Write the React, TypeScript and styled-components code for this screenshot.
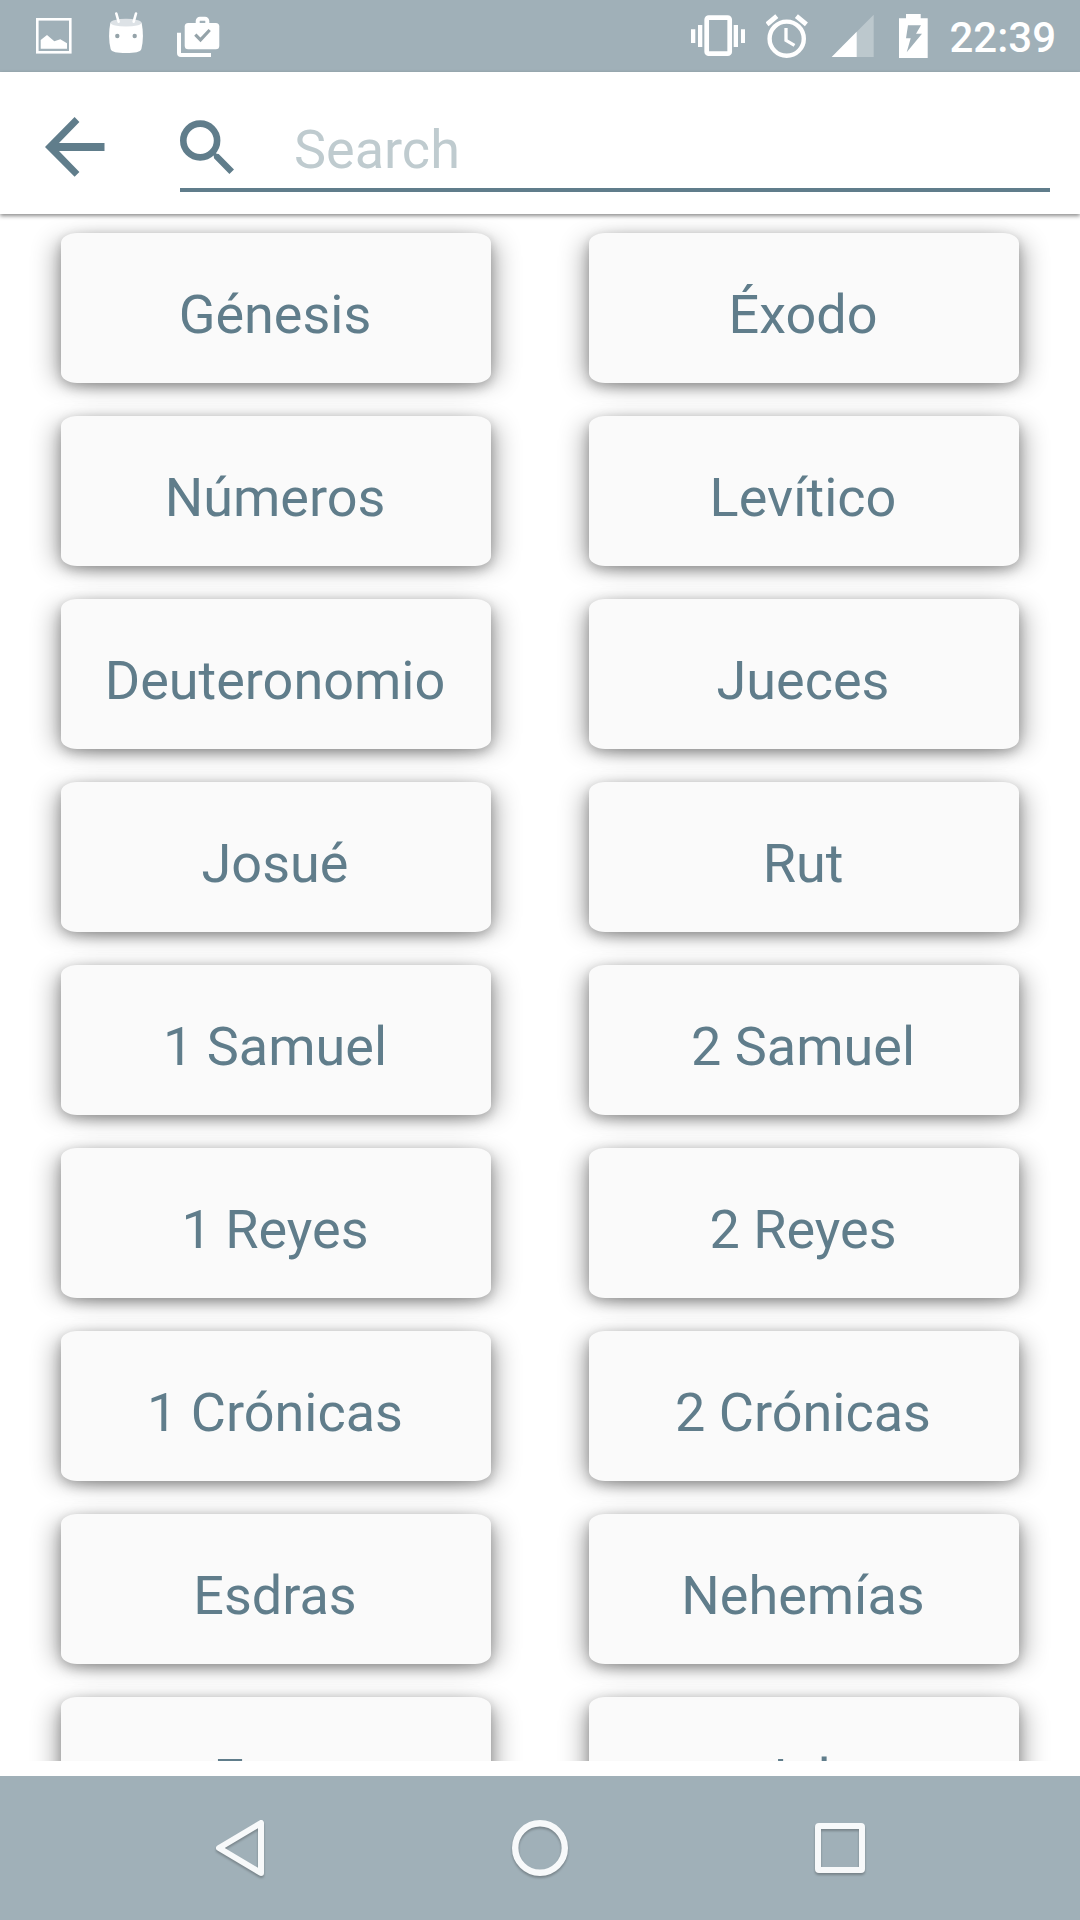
import React, { useState } from "react";
import styled, { createGlobalStyle } from "styled-components";

const slate = "#607d8b";
const bar = "#a0b0b8";

const GlobalStyle = createGlobalStyle`
  *, *::before, *::after { box-sizing: border-box; }
  body { margin: 0; background: #fff; font-family: Roboto, "Noto Sans", sans-serif; }
  button { font: inherit; border: 0; padding: 0; background: none; cursor: pointer; }
`;

const Screen = styled.div`
  display: flex;
  flex-direction: column;
  height: 100vh;
  background: #fff;
`;

const StatusBar = styled.div`
  display: flex;
  flex: none;
  align-items: center;
  justify-content: space-between;
  height: 72px;
  padding: 0 24px 0 18px;
  background: ${bar};
  color: #fff;
`;

const StatusGroup = styled.div<{ $gap: number }>`
  display: flex;
  align-items: center;
  gap: ${(p) => p.$gap}px;
`;

const Glyph = styled.svg`
  display: block;
  flex: none;
`;

const Clock = styled.time`
  padding-top: 4px;
  font-size: 42px;
  line-height: 48px;
  font-weight: 500;
`;

const Header = styled.header`
  position: relative;
  z-index: 1;
  display: flex;
  flex: none;
  align-items: flex-end;
  height: 142px;
  padding: 0 30px 22px 0;
  background: #fff;
  box-shadow: 0 2px 4px rgba(0, 0, 0, 0.45);
`;

const BackButton = styled.button`
  display: flex;
  flex: none;
  align-items: center;
  justify-content: center;
  width: 150px;
  height: 90px;
  margin-right: 30px;
`;

const SearchField = styled.label`
  display: flex;
  flex: 1;
  align-items: center;
  gap: 60px;
  height: 81px;
  border-bottom: 4px solid ${slate};
`;

const SearchInput = styled.input`
  flex: 1;
  min-width: 0;
  padding: 0;
  border: 0;
  outline: 0;
  background: none;
  color: ${slate};
  font: inherit;
  font-size: 54px;
  line-height: 64px;

  &::placeholder {
    color: #bfcbcf;
    opacity: 1;
  }
`;

const BookList = styled.main`
  flex: 1;
  min-height: 0;
  margin-bottom: 15px;
  overflow-y: auto;
  scrollbar-width: none;
`;

const BookGrid = styled.div`
  display: grid;
  grid-template-columns: 1fr 1fr;
  gap: 33px 98px;
  padding: 19px 61px 33px;
`;

const BookButton = styled.button`
  && {
    height: 150px;
    padding: 14px 2px 0 0;
    border-radius: 16px / 10px;
    background: #fafafa;
    color: ${slate};
    font-size: 54px;
    line-height: 64px;
    box-shadow:
      0 4px 12px rgba(0, 0, 0, 0.22),
      -12px 4px 24px -6px rgba(0, 0, 0, 0.3),
      12px 4px 24px -6px rgba(0, 0, 0, 0.3);
  }
`;

const NavBar = styled.nav`
  display: flex;
  flex: none;
  justify-content: center;
  height: 144px;
  background: ${bar};
`;

const NavButton = styled.button`
  display: flex;
  align-items: center;
  justify-content: center;
  flex: 0 1 300px;

  svg {
    filter: drop-shadow(0 2px 1px rgba(0, 0, 0, 0.25));
  }
`;

const books = [
  "Génesis", "Éxodo",
  "Números", "Levítico",
  "Deuteronomio", "Jueces",
  "Josué", "Rut",
  "1 Samuel", "2 Samuel",
  "1 Reyes", "2 Reyes",
  "1 Crónicas", "2 Crónicas",
  "Esdras", "Nehemías",
  "Ester", "Job",
];

const PictureIcon = () => (
  <Glyph width="72" height="48" viewBox="0 0 72 48" aria-hidden="true">
    <rect x="19.3" y="7.3" width="33" height="33" fill="none" stroke="#fff" strokeWidth="2.6" />
    <path d="M22.7 36.7V28L29 23l7.3 6.3 6-2 6.7 4v5.4z" fill="#fff" />
  </Glyph>
);

const RobotIcon = () => (
  <Glyph width="72" height="48" viewBox="0 0 72 48" aria-hidden="true">
    <path d="M20.4 10.7C18.6 19 18.6 29 20.6 37c.8 3 6.4 4 15.4 4s14.6-1 15.4-4c2-8 2-18 .2-26.3z" fill="#fff" />
    <ellipse cx="36" cy="10.7" rx="15.5" ry="3.9" fill="#dde2e6" />
    <path d="M26.3 1.5l2.3 8.200M46 1.5l-2.3 8.2" stroke="#fff" strokeWidth="2.6" strokeLinecap="round" />
    <circle cx="27.3" cy="24" r="2.2" fill="#95a3a9" />
    <circle cx="44.7" cy="24" r="2.2" fill="#95a3a9" />
  </Glyph>
);

const ShopIcon = () => (
  <Glyph width="72" height="48" viewBox="0 0 72 48" aria-hidden="true">
    <path d="M17 20.7V41a2 2 0 0 0 2 2h30" fill="none" stroke="#fff" strokeWidth="4" />
    <path d="M35.7 12V9a2.3 2.3 0 0 1 2.3-2.3h5A2.3 2.3 0 0 1 45.3 9v3" fill="none" stroke="#fff" strokeWidth="4" />
    <rect x="22.7" y="11" width="34.6" height="26.3" rx="3.5" fill="#fff" />
    <path d="M33.3 22.7l5.2 5.2 9.2-9.9" fill="none" stroke="#95a3a9" strokeWidth="3.2" />
  </Glyph>
);

const VibrateIcon = () => (
  <Glyph width="56" height="48" viewBox="0 0 56 48" aria-hidden="true">
    <rect x="16.7" y="5.7" width="23" height="36" rx="2" fill="none" stroke="#fff" strokeWidth="4.7" />
    <path d="M1 17.3h4.3V31H1zM8 13h4.3v22H8zM43.7 13H48v22h-4.300zM51 17.3h4V31h-4z" fill="#fff" />
  </Glyph>
);

const AlarmIcon = () => (
  <Glyph width="42" height="48" viewBox="0 0 42 48" aria-hidden="true">
    <g fill="none" stroke="#fff">
      <circle cx="20.7" cy="26.7" r="17.1" strokeWidth="4.4" />
      <path d="M20 16v12.3l8.5 5" strokeWidth="3.3" />
      <path d="M1 12.3L10.8 4.2M30.4 4.2l10 8.1" strokeWidth="4.8" />
    </g>
  </Glyph>
);

const SignalIcon = () => (
  <Glyph width="50" height="48" viewBox="0 0 50 48" aria-hidden="true">
    <path d="M3.7 45L45.7 2.7V45z" fill="#fff" fillOpacity=".3" />
    <path d="M3.7 45l25-25.2V45z" fill="#fff" />
  </Glyph>
);

const BatteryIcon = () => (
  <Glyph width="31" height="48" viewBox="0 0 31 48" aria-hidden="true">
    <path d="M8 2h14.7v4.3h7V46H1V6.3h7z" fill="#fff" />
    <path d="M10 13.3h13l-5 8.4h6L8.7 40.3l4-14H8z" fill={bar} />
  </Glyph>
);

const ArrowIcon = () => (
  <Glyph width="60" height="60" viewBox="0 0 60 60" aria-hidden="true">
    <path d="M0 30L29.6 0l4.8 5L14 26h45.5v8H14l20.4 21-4.8 4.8z" fill={slate} />
  </Glyph>
);

const SearchIcon = () => (
  <Glyph width="54" height="60" viewBox="0 0 54 60" aria-hidden="true">
    <circle cx="20.2" cy="20.5" r="16.9" fill="none" stroke={slate} strokeWidth="6.6" />
    <path d="M32 33l2.5-2.5 2 3.2 2.2.3L54 49.5 49.4 54 34 38.2l-.3-2.4z" fill={slate} />
  </Glyph>
);

export default function App() {
  const [query, setQuery] = useState("");
  const shown = books.filter((b) => b.toLowerCase().includes(query.toLowerCase()));

  return (
    <Screen>
      <GlobalStyle />
      <StatusBar>
        <StatusGroup $gap={0}>
          <PictureIcon />
          <RobotIcon />
          <ShopIcon />
        </StatusGroup>
        <StatusGroup $gap={20}>
          <VibrateIcon />
          <AlarmIcon />
          <SignalIcon />
          <BatteryIcon />
          <Clock>22:39</Clock>
        </StatusGroup>
      </StatusBar>

      <Header>
        <BackButton type="button" aria-label="Back">
          <ArrowIcon />
        </BackButton>
        <SearchField>
          <SearchIcon />
          <SearchInput
            type="text"
            placeholder="Search"
            aria-label="Search"
            value={query}
            onChange={(e) => setQuery(e.target.value)}
          />
        </SearchField>
      </Header>

      <BookList>
        <BookGrid>
          {shown.map((book) => (
            <BookButton key={book} type="button">{book}</BookButton>
          ))}
        </BookGrid>
      </BookList>

      <NavBar>
        <NavButton type="button" aria-label="Go back">
          <Glyph width="56" height="58" viewBox="0 0 56 58">
            <path d="M7 29L49 4v50z" fill="none" stroke="#f7f9fa" strokeWidth="6" strokeLinejoin="round" />
          </Glyph>
        </NavButton>
        <NavButton type="button" aria-label="Home">
          <Glyph width="56" height="56" viewBox="0 0 56 56">
            <circle cx="28" cy="28" r="24.8" fill="none" stroke="#f7f9fa" strokeWidth="6.4" />
          </Glyph>
        </NavButton>
        <NavButton type="button" aria-label="Recent apps">
          <Glyph width="50" height="50" viewBox="0 0 50 50">
            <rect x="3" y="3" width="44" height="44" rx="1" fill="none" stroke="#f7f9fa" strokeWidth="6" strokeLinejoin="round" />
          </Glyph>
        </NavButton>
      </NavBar>
    </Screen>
  );
}
